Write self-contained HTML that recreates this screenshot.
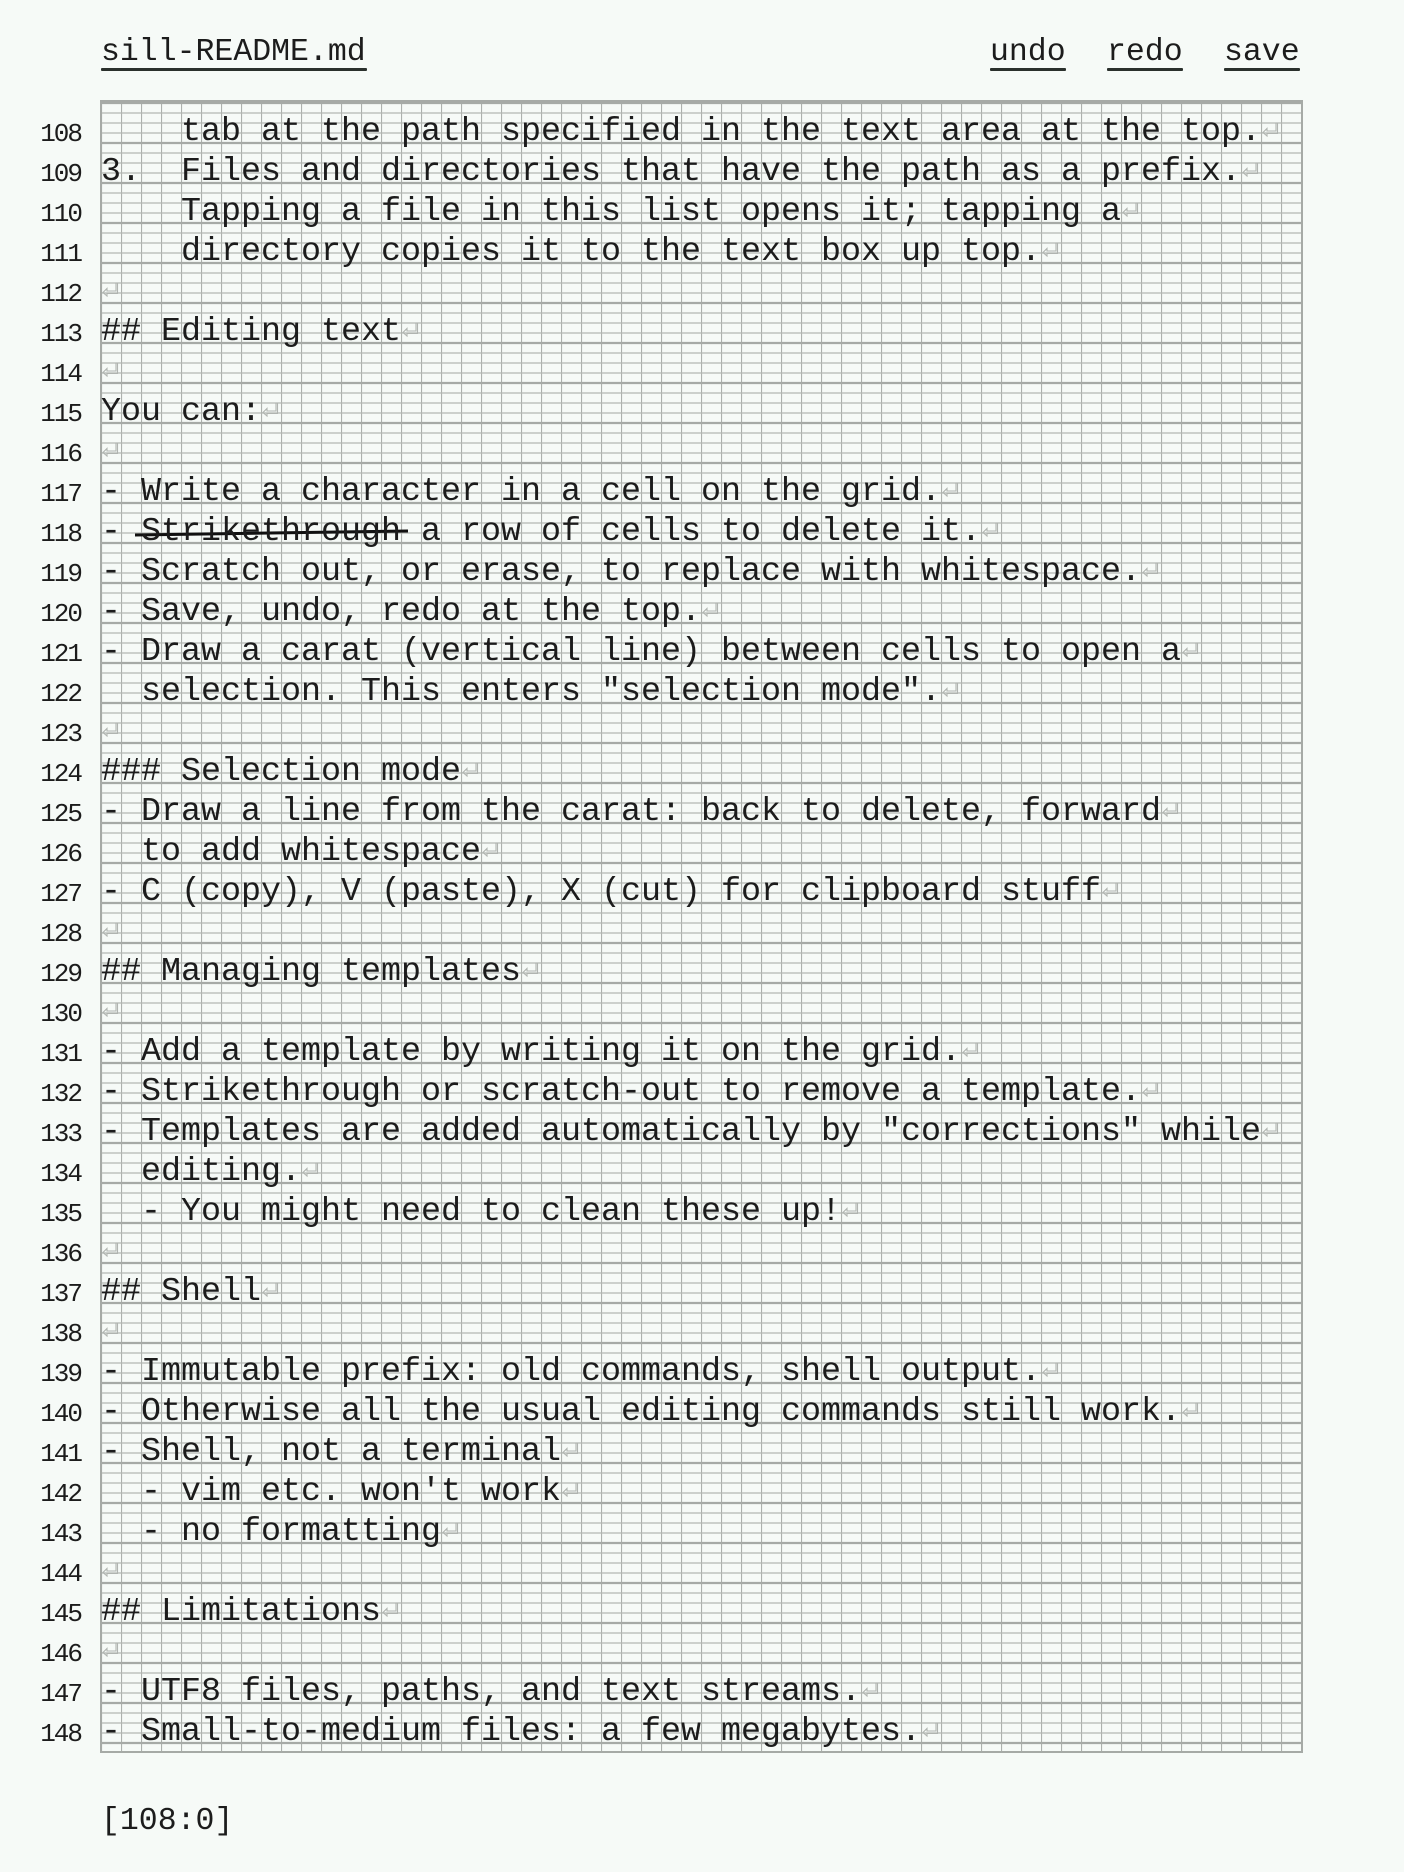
<!DOCTYPE html>
<html><head><meta charset="utf-8"><style>
html,body{margin:0;padding:0;background:#f6faf7;}
body{width:1404px;height:1872px;position:relative;overflow:hidden;font-family:"Liberation Mono",monospace;color:#1c1c1c;}
.hd{position:absolute;top:33px;font-size:31.5px;line-height:40px;white-space:pre;}
.ul{position:absolute;top:68px;height:3px;background:#2a302c;border-radius:1px;}
#txt{position:absolute;left:101px;top:112px;}
#txt div{height:40px;line-height:40px;font-size:33.33px;white-space:pre;}
#num{position:absolute;left:0;top:114px;width:81px;text-align:right;}
#num div{height:40px;line-height:40px;font-size:26px;letter-spacing:-2px;}
.r{display:inline-block;width:20px;height:14px;position:relative;top:-4px;}
.r svg{display:block;}
</style></head><body>
<svg width="1404" height="1872" style="position:absolute;left:0;top:0">
<defs>
<pattern id="g" x="101" y="103" width="20" height="40" patternUnits="userSpaceOnUse">
<line x1="0.5" y1="0" x2="0.5" y2="40" stroke="#adb1ad" stroke-width="1.2"/>
<line x1="0" y1="10" x2="20" y2="10" stroke="#b3b7b3" stroke-width="1.2"/>
<line x1="0" y1="20" x2="20" y2="20" stroke="#b3b7b3" stroke-width="1.2"/>
<line x1="0" y1="30" x2="20" y2="30" stroke="#b3b7b3" stroke-width="1.2"/>
<line x1="0" y1="0" x2="20" y2="0" stroke="#a6aaa6" stroke-width="2.2"/>
<line x1="0" y1="40" x2="20" y2="40" stroke="#a6aaa6" stroke-width="2.2"/>
</pattern>
</defs>
<rect x="101" y="101" width="1201" height="1651" fill="url(#g)" stroke="#a6aaa6" stroke-width="2"/>
<path d="M135 535 L270 533 L408 531" stroke="#111" stroke-width="3" fill="none"/>
</svg>
<div class="hd" style="left:101px">sill-README.md</div><div class="ul" style="left:101px;width:266px"></div>
<div class="hd" style="left:990px">undo</div><div class="ul" style="left:990px;width:76px"></div>
<div class="hd" style="left:1107px">redo</div><div class="ul" style="left:1107px;width:76px"></div>
<div class="hd" style="left:1224px">save</div><div class="ul" style="left:1224px;width:76px"></div>
<div id="num">
<div>108</div><div>109</div><div>110</div><div>111</div><div>112</div><div>113</div><div>114</div><div>115</div><div>116</div><div>117</div><div>118</div><div>119</div><div>120</div><div>121</div><div>122</div><div>123</div><div>124</div><div>125</div><div>126</div><div>127</div><div>128</div><div>129</div><div>130</div><div>131</div><div>132</div><div>133</div><div>134</div><div>135</div><div>136</div><div>137</div><div>138</div><div>139</div><div>140</div><div>141</div><div>142</div><div>143</div><div>144</div><div>145</div><div>146</div><div>147</div><div>148</div>
</div>
<svg width="0" height="0" style="position:absolute"><defs><g id="ret"><path d="M15 1 V9 H6 V6.5 L2 10.5 L6 14 V11.5 H16.5 V1 Z" fill="none" stroke="#b0b4b0" stroke-width="1.1"/></g></defs></svg>
<div id="txt">
<div>    tab at the path specified in the text area at the top.<span class="r"><svg width="20" height="15"><use href="#ret"/></svg></span></div>
<div>3.  Files and directories that have the path as a prefix.<span class="r"><svg width="20" height="15"><use href="#ret"/></svg></span></div>
<div>    Tapping a file in this list opens it; tapping a<span class="r"><svg width="20" height="15"><use href="#ret"/></svg></span></div>
<div>    directory copies it to the text box up top.<span class="r"><svg width="20" height="15"><use href="#ret"/></svg></span></div>
<div><span class="r"><svg width="20" height="15"><use href="#ret"/></svg></span></div>
<div>## Editing text<span class="r"><svg width="20" height="15"><use href="#ret"/></svg></span></div>
<div><span class="r"><svg width="20" height="15"><use href="#ret"/></svg></span></div>
<div>You can:<span class="r"><svg width="20" height="15"><use href="#ret"/></svg></span></div>
<div><span class="r"><svg width="20" height="15"><use href="#ret"/></svg></span></div>
<div>- Write a character in a cell on the grid.<span class="r"><svg width="20" height="15"><use href="#ret"/></svg></span></div>
<div>- Strikethrough a row of cells to delete it.<span class="r"><svg width="20" height="15"><use href="#ret"/></svg></span></div>
<div>- Scratch out, or erase, to replace with whitespace.<span class="r"><svg width="20" height="15"><use href="#ret"/></svg></span></div>
<div>- Save, undo, redo at the top.<span class="r"><svg width="20" height="15"><use href="#ret"/></svg></span></div>
<div>- Draw a carat (vertical line) between cells to open a<span class="r"><svg width="20" height="15"><use href="#ret"/></svg></span></div>
<div>  selection. This enters "selection mode".<span class="r"><svg width="20" height="15"><use href="#ret"/></svg></span></div>
<div><span class="r"><svg width="20" height="15"><use href="#ret"/></svg></span></div>
<div>### Selection mode<span class="r"><svg width="20" height="15"><use href="#ret"/></svg></span></div>
<div>- Draw a line from the carat: back to delete, forward<span class="r"><svg width="20" height="15"><use href="#ret"/></svg></span></div>
<div>  to add whitespace<span class="r"><svg width="20" height="15"><use href="#ret"/></svg></span></div>
<div>- C (copy), V (paste), X (cut) for clipboard stuff<span class="r"><svg width="20" height="15"><use href="#ret"/></svg></span></div>
<div><span class="r"><svg width="20" height="15"><use href="#ret"/></svg></span></div>
<div>## Managing templates<span class="r"><svg width="20" height="15"><use href="#ret"/></svg></span></div>
<div><span class="r"><svg width="20" height="15"><use href="#ret"/></svg></span></div>
<div>- Add a template by writing it on the grid.<span class="r"><svg width="20" height="15"><use href="#ret"/></svg></span></div>
<div>- Strikethrough or scratch-out to remove a template.<span class="r"><svg width="20" height="15"><use href="#ret"/></svg></span></div>
<div>- Templates are added automatically by "corrections" while<span class="r"><svg width="20" height="15"><use href="#ret"/></svg></span></div>
<div>  editing.<span class="r"><svg width="20" height="15"><use href="#ret"/></svg></span></div>
<div>  - You might need to clean these up!<span class="r"><svg width="20" height="15"><use href="#ret"/></svg></span></div>
<div><span class="r"><svg width="20" height="15"><use href="#ret"/></svg></span></div>
<div>## Shell<span class="r"><svg width="20" height="15"><use href="#ret"/></svg></span></div>
<div><span class="r"><svg width="20" height="15"><use href="#ret"/></svg></span></div>
<div>- Immutable prefix: old commands, shell output.<span class="r"><svg width="20" height="15"><use href="#ret"/></svg></span></div>
<div>- Otherwise all the usual editing commands still work.<span class="r"><svg width="20" height="15"><use href="#ret"/></svg></span></div>
<div>- Shell, not a terminal<span class="r"><svg width="20" height="15"><use href="#ret"/></svg></span></div>
<div>  - vim etc. won't work<span class="r"><svg width="20" height="15"><use href="#ret"/></svg></span></div>
<div>  - no formatting<span class="r"><svg width="20" height="15"><use href="#ret"/></svg></span></div>
<div><span class="r"><svg width="20" height="15"><use href="#ret"/></svg></span></div>
<div>## Limitations<span class="r"><svg width="20" height="15"><use href="#ret"/></svg></span></div>
<div><span class="r"><svg width="20" height="15"><use href="#ret"/></svg></span></div>
<div>- UTF8 files, paths, and text streams.<span class="r"><svg width="20" height="15"><use href="#ret"/></svg></span></div>
<div>- Small-to-medium files: a few megabytes.<span class="r"><svg width="20" height="15"><use href="#ret"/></svg></span></div>
</div>
<div class="hd" style="left:101px;top:1802px">[108:0]</div>
</body></html>
